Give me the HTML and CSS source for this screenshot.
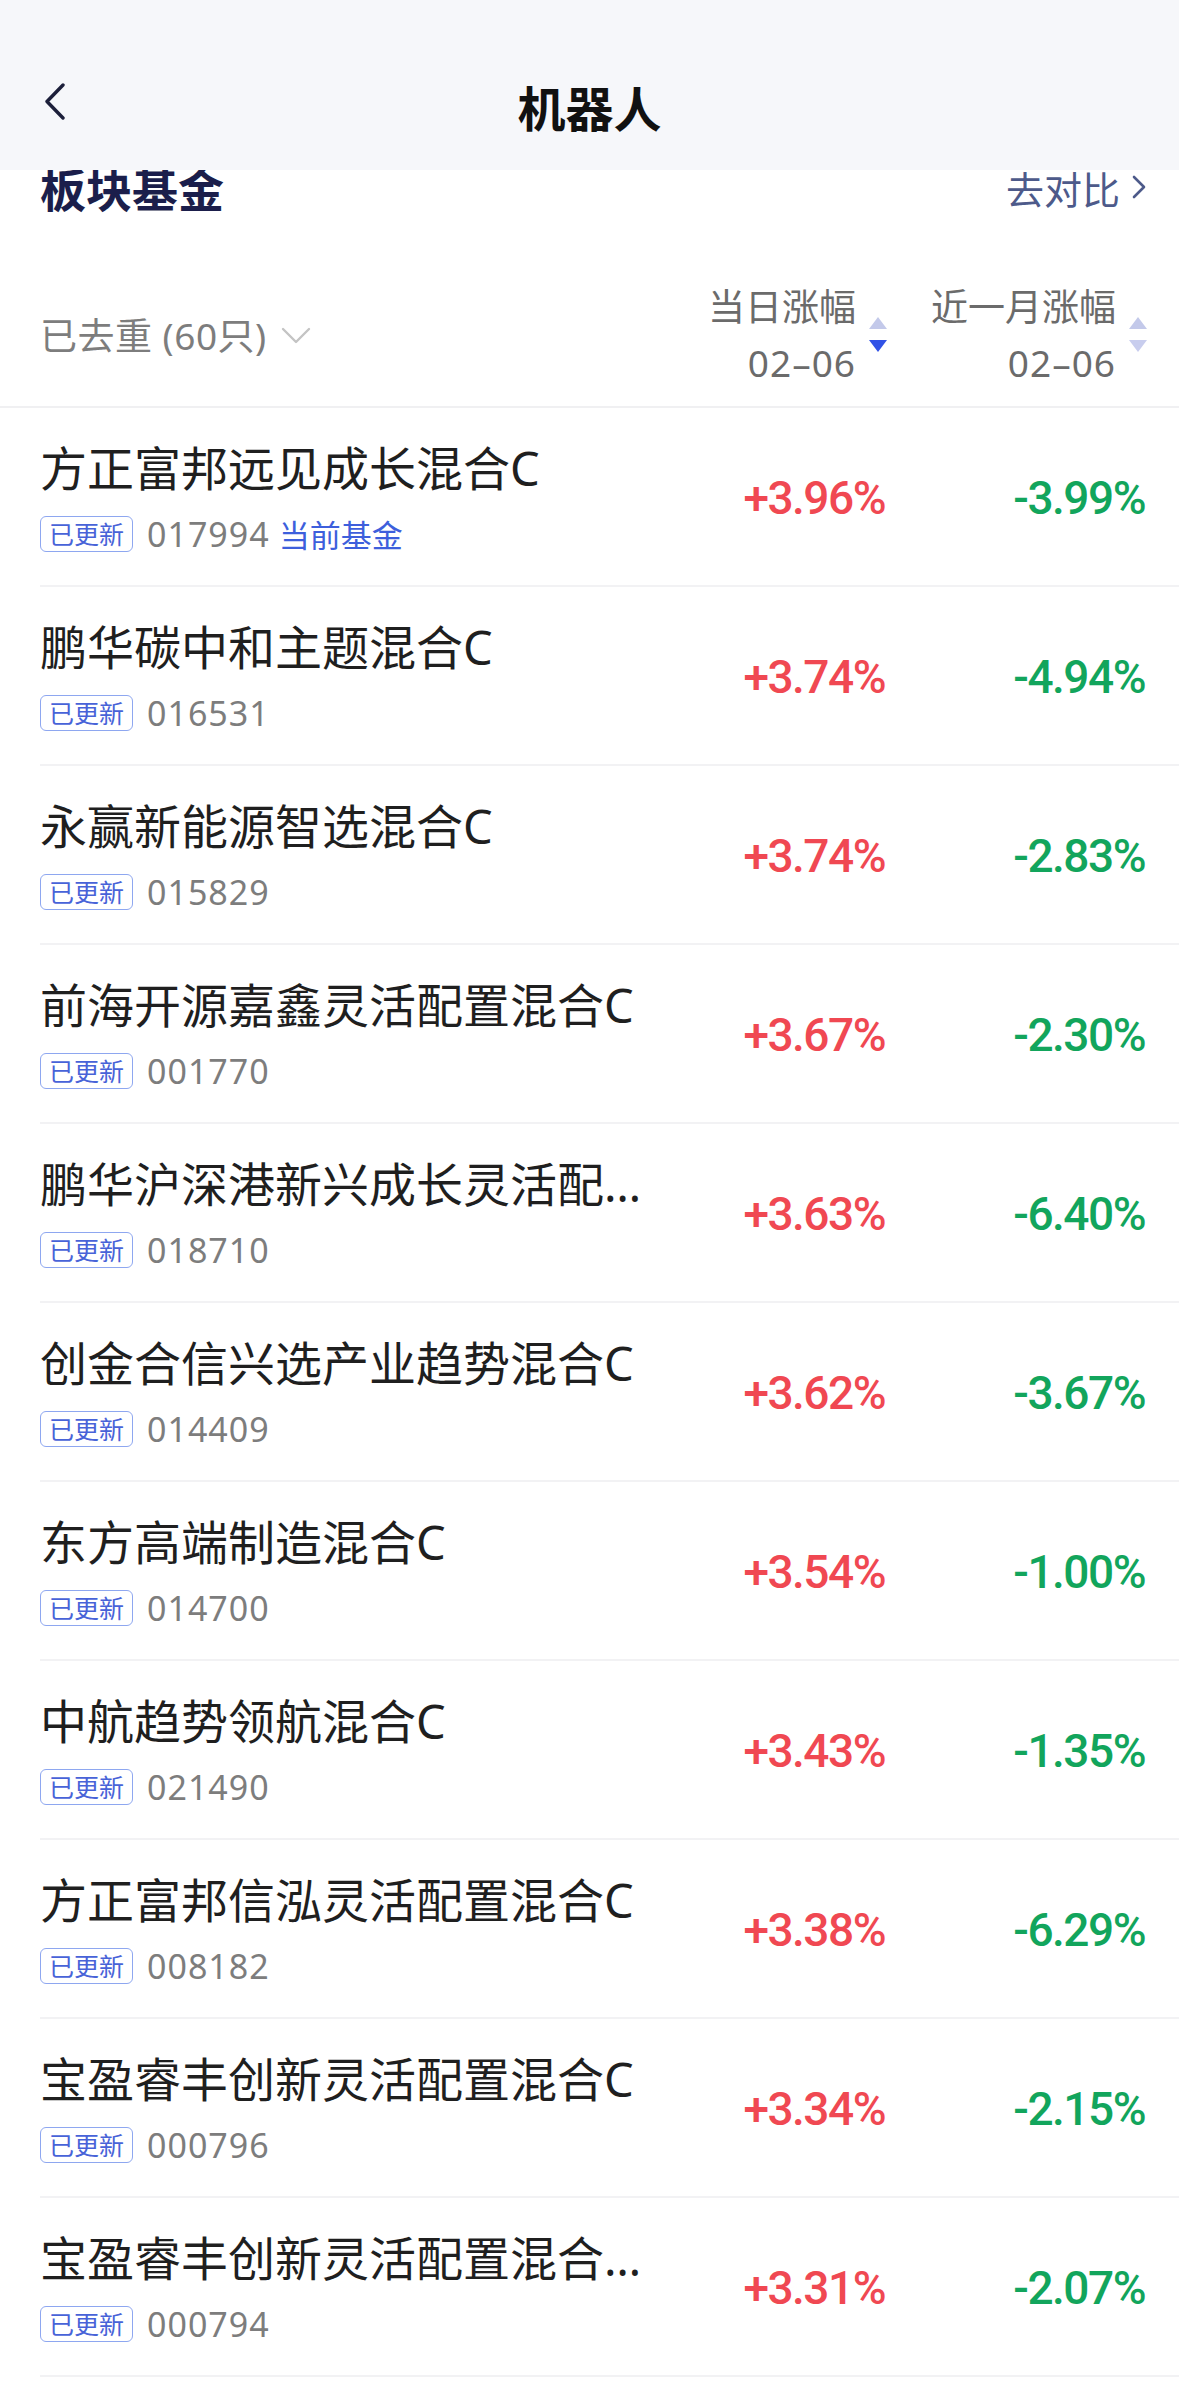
FILE: index.html
```html
<!DOCTYPE html>
<html>
<head>
  <meta charset="utf-8">
  <meta name="viewport" content="width=device-width">
  <title>机器人</title>
  <link rel="stylesheet" href="styles.css">
</head>
<body>
<div class="nav">
  <div class="nav-back">
    <svg width="22" height="37" viewBox="0 0 22 37"><path d="M19 2 L3 18.5 L19 35" fill="none" stroke="#1c1f3a" stroke-width="3.4" stroke-linecap="round" stroke-linejoin="round"/></svg>
  </div>
  <div class="nav-title">机器人</div>
  <div></div>
</div>

<div class="sec-head">
  <div class="sec-title">板块基金</div>
  <div class="sec-link">去对比
    <svg width="15" height="24" viewBox="0 0 15 24"><path d="M2 2 L12 12 L2 22" fill="none" stroke="#4d5a8a" stroke-width="2.6" stroke-linecap="round" stroke-linejoin="round"/></svg>
  </div>
</div>

<div class="list-head">
  <div class="dedup">已去重 (60只)
    <svg width="30" height="17" viewBox="0 0 30 17"><path d="M2 2 L15 15 L28 2" fill="none" stroke="#c4c4c4" stroke-width="2.4" stroke-linecap="round" stroke-linejoin="round"/></svg>
  </div>
  <div class="col-head">
    <div class="col-text">当日涨幅<br><span class="date">02–06</span></div>
    <svg class="sort" width="18" height="35" viewBox="0 0 18 35"><polygon points="9,0 18,12 0,12" fill="#c3c9ea"/><polygon points="0,23 18,23 9,35" fill="#3152e6"/></svg>
  </div>
  <div class="col-head">
    <div class="col-text">近一月涨幅<br><span class="date">02–06</span></div>
    <svg class="sort" width="18" height="35" viewBox="0 0 18 35"><polygon points="9,0 18,12 0,12" fill="#c3c9ea"/><polygon points="0,23 18,23 9,35" fill="#c8cdee"/></svg>
  </div>
</div>

<div class="list" id="list"></div>

<script>
  var funds = [
    ["方正富邦远见成长混合C", "017994", "+3.96%", "-3.99%", true],
    ["鹏华碳中和主题混合C", "016531", "+3.74%", "-4.94%"],
    ["永赢新能源智选混合C", "015829", "+3.74%", "-2.83%"],
    ["前海开源嘉鑫灵活配置混合C", "001770", "+3.67%", "-2.30%"],
    ["鹏华沪深港新兴成长灵活配置混合C", "018710", "+3.63%", "-6.40%"],
    ["创金合信兴选产业趋势混合C", "014409", "+3.62%", "-3.67%"],
    ["东方高端制造混合C", "014700", "+3.54%", "-1.00%"],
    ["中航趋势领航混合C", "021490", "+3.43%", "-1.35%"],
    ["方正富邦信泓灵活配置混合C", "008182", "+3.38%", "-6.29%"],
    ["宝盈睿丰创新灵活配置混合C", "000796", "+3.34%", "-2.15%"],
    ["宝盈睿丰创新灵活配置混合A/B", "000794", "+3.31%", "-2.07%"]
  ];

  function colorOf(v) {
    return v.charAt(0) == "-" ? "down" : "up";
  }

  var html = "";
  funds.forEach(function(f) {
    html += `<div class="row">
      <div class="info">
        <div class="name">${f[0]}</div>
        <div class="sub"><span class="tag">已更新</span><span class="code">${f[1]}</span>${f[4] ? '<span class="current">当前基金</span>' : ''}</div>
      </div>
      <div class="val ${colorOf(f[2])}">${f[2]}</div>
      <div class="val ${colorOf(f[3])}">${f[3]}</div>
    </div>`;
  });
  document.getElementById("list").innerHTML = html;
</script>
</body>
</html>
```
FILE: styles.css
```css
* {
  box-sizing: border-box;
}
body {
  margin: 0;
  background: #fff;
  font-family: "Noto Sans CJK SC", "Noto Sans", sans-serif;
  color: #1f1f1f;
}
.nav {
  position: relative;
  z-index: 2;
  height: 170px;
  background: #f6f7fa;
  display: grid;
  grid-template-columns: 1fr auto 1fr;
  align-items: center;
  padding-top: 76px;
  padding-bottom: 34px;
}
.nav-back {
  padding-left: 44px;
  height: 37px;
  margin-top: -10px;
}
.nav-back svg {
  display: block;
}
.nav-title {
  font-size: 48px;
  font-weight: 700;
  line-height: 60px;
  color: #111;
}
.sec-head {
  position: relative;
  z-index: 1;
  display: flex;
  justify-content: space-between;
  align-items: center;
  height: 60px;
  margin-top: -13px;
  margin-bottom: 3px;
  padding: 0 32px 0 40px;
}
.sec-title {
  font-size: 46px;
  font-weight: 700;
  color: #1b1e4b;
  line-height: 60px;
}
.sec-link {
  display: flex;
  align-items: center;
  font-size: 38px;
  color: #4d5a8a;
}
.sec-link svg {
  margin-left: 12px;
}
.list-head {
  display: grid;
  grid-template-columns: minmax(0, 1fr) 233px 260px;
  align-items: center;
  height: 188px;
  padding: 42px 34px 0 40px;
  border-bottom: 2px solid #f0f0f2;
}
.dedup {
  display: flex;
  align-items: center;
  font-family: "Noto Sans", "Noto Sans CJK SC", sans-serif;
  font-size: 37px;
  letter-spacing: 0.5px;
  color: #7d7d7d;
}
.dedup svg {
  margin-left: 14px;
  margin-top: 2px;
}
.col-head {
  display: flex;
  justify-content: flex-end;
  align-items: center;
}
.col-text {
  text-align: right;
  font-size: 37px;
  line-height: 56px;
  color: #6b6b6b;
}
.date {
  font-family: "Noto Sans", sans-serif;
  letter-spacing: 1px;
}
.sort {
  margin-left: 13px;
  margin-right: -2px;
}
.row {
  display: grid;
  grid-template-columns: 620px 1fr 260px;
  align-items: center;
  margin-left: 40px;
  padding-right: 34px;
  height: 179px;
  border-bottom: 2px solid #f2f2f4;
}
.info {
  min-width: 0;
  padding-bottom: 6px;
}
.name {
  font-family: "Noto Sans", "Noto Sans CJK SC", sans-serif;
  font-size: 47px;
  line-height: 68px;
  color: #1f1f1f;
  white-space: nowrap;
  overflow: hidden;
  text-overflow: ellipsis;
}
.sub {
  display: flex;
  align-items: center;
  height: 40px;
  margin-top: 12px;
}
.tag {
  display: inline-block;
  height: 36px;
  line-height: 32px;
  padding: 0 8px;
  border: 1.5px solid #8ea7f0;
  border-radius: 6px;
  font-size: 25px;
  color: #4863d8;
}
.code {
  margin-left: 14px;
  font-family: "Noto Sans", sans-serif;
  font-size: 34px;
  letter-spacing: 1px;
  color: #7d7d7d;
}
.current {
  margin-left: 9px;
  font-size: 31px;
  color: #3d5fdc;
}
.val {
  text-align: right;
  font-family: Roboto, "Noto Sans", sans-serif;
  font-weight: 500;
  font-size: 46px;
  letter-spacing: -1.5px;
  margin-top: 2px;
}
.up {
  color: #f04852;
}
.down {
  color: #12a55c;
}
```
